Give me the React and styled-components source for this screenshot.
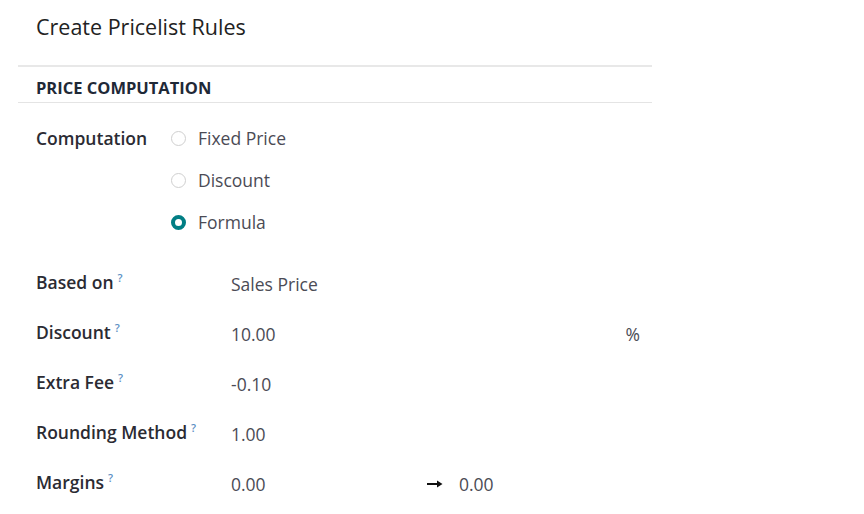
import styled, { createGlobalStyle } from "styled-components";

const GlobalStyle = createGlobalStyle`
  body {
    margin: 0;
    background: #fff;
    font-family: "Open Sans", "Noto Sans", sans-serif;
    color: #374151;
  }
`;

const rows = [
  { label: "Based on", value: "Sales Price" },
  { label: "Discount", value: "10.00", suffix: "%" },
  { label: "Extra Fee", value: "-0.10" },
  { label: "Rounding Method", value: "1.00" },
  { label: "Margins", value: "0.00", to: "0.00" },
];

const options = ["Fixed Price", "Discount", "Formula"];

function ArrowIcon() {
  return (
    <svg width="16" height="10" viewBox="0 0 16 10">
      <path d="M0 5h12" stroke="#111" strokeWidth="2" />
      <path d="M10 1.5L15.5 5L10 8.5z" fill="#111" />
    </svg>
  );
}

export default function App() {
  return (
    <>
      <GlobalStyle />
      <Page>
        <Title>Create Pricelist Rules</Title>
        <Section>
          <SectionHeader>Price Computation</SectionHeader>
          <ComputationRow>
            <Label>Computation</Label>
            <RadioList>
              {options.map(opt => (
                <RadioOption key={opt}>
                  <Radio $checked={opt === "Formula"} />
                  {opt}
                </RadioOption>
              ))}
            </RadioList>
          </ComputationRow>
          <Fields>
            {rows.map(row => (
              <Field key={row.label}>
                <Label>
                  {row.label}
                  <Help>?</Help>
                </Label>
                <Value>
                  <Amount $width={row.to ? 196 : 0}>{row.value}</Amount>
                  {row.suffix && <Suffix>{row.suffix}</Suffix>}
                  {row.to && (
                    <Range>
                      <ArrowIcon />
                      {row.to}
                    </Range>
                  )}
                </Value>
              </Field>
            ))}
          </Fields>
        </Section>
      </Page>
    </>
  );
}

const Page = styled.div`
  width: 634px;
  padding: 11px 0 0 18px;
`;

const Title = styled.h1`
  margin: 0;
  padding: 0 0 0 18px;
  height: 54px;
  border-bottom: 2px solid #e8e8e8;
  font-size: 21.5px;
  font-weight: 400;
  line-height: 32px;
  color: #222;
`;

const Section = styled.section``;

const SectionHeader = styled.h2`
  margin: 0;
  padding: 0 0 0 18px;
  height: 35px;
  line-height: 42px;
  border-bottom: 1px solid #e4e4e4;
  font-size: 16.5px;
  font-weight: 700;
  text-transform: uppercase;
  color: #1f2937;
`;

const ComputationRow = styled.div`
  display: flex;
  padding: 24px 0 0 18px;
`;

const Label = styled.div`
  width: 135px;
  flex-shrink: 0;
  font-size: 17.5px;
  font-weight: 600;
  line-height: 22px;
  color: #2b2b33;
  white-space: nowrap;
`;

const RadioList = styled.div`
  display: flex;
  flex-direction: column;
  gap: 20px;
`;

const RadioOption = styled.label`
  display: flex;
  align-items: center;
  gap: 12px;
  font-size: 17.5px;
  line-height: 22px;
  color: #4b4b55;
`;

const Radio = styled.span`
  box-sizing: border-box;
  width: 15px;
  height: 15px;
  border-radius: 50%;
  border: ${p => (p.$checked ? "4.5px solid #017e84" : "1px solid #cfcfcf")};
  background: #fff;
`;

const Fields = styled.div`
  display: flex;
  flex-direction: column;
  gap: 28px;
  padding: 38px 0 0 18px;
`;

const Field = styled.div`
  display: flex;
  align-items: flex-start;
  height: 22px;
`;

const Help = styled.sup`
  margin-left: 4px;
  font-size: 11px;
  font-weight: 600;
  color: #5b8fc4;
  vertical-align: 7px;
  line-height: 0;
`;

const Value = styled.div`
  flex: 1;
  display: flex;
  align-items: center;
  padding: 2px 0 0 60px;
  font-size: 17.5px;
  line-height: 22px;
  color: #4b4b55;
`;

const Amount = styled.span`
  min-width: ${p => p.$width}px;
`;

const Suffix = styled.span`
  margin-left: auto;
  margin-right: 12px;
`;

const Range = styled.span`
  display: flex;
  align-items: center;
  gap: 16px;
`;
